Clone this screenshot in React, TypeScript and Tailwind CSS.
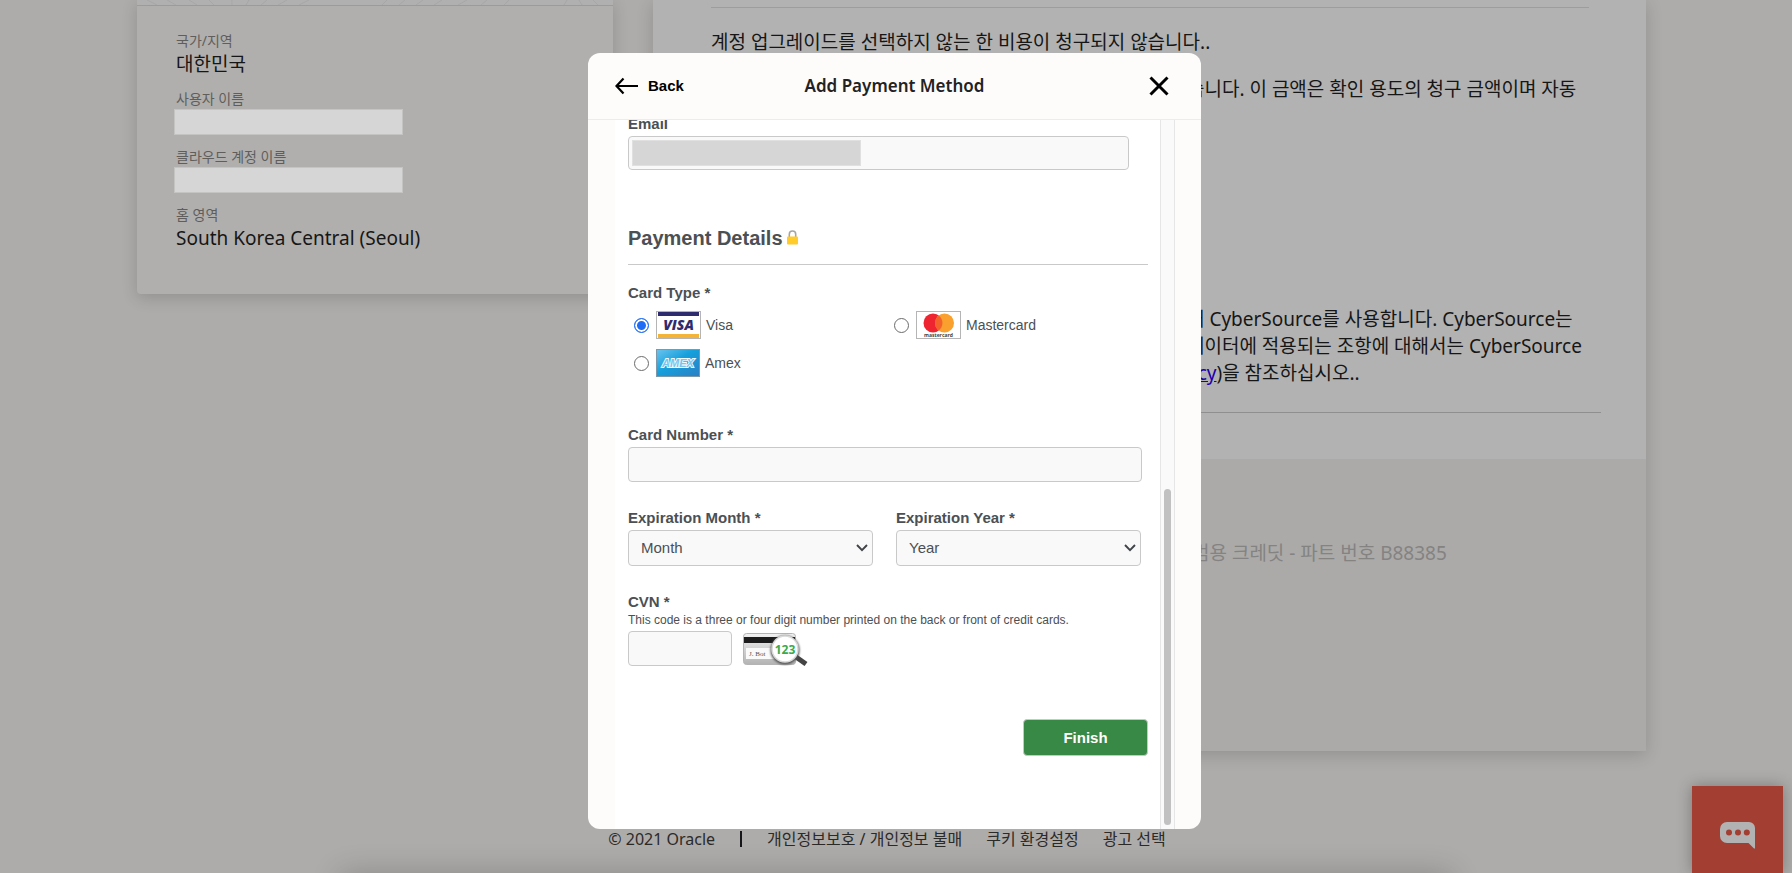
import React from 'react';

const KR = "font-['Noto_Sans','Noto_Sans_CJK_KR',sans-serif]";
const ARIAL = "font-['Liberation_Sans',Arial,sans-serif]";

function VisaLogo() {
  return (
    <svg width="45" height="28" viewBox="0 0 45 28" aria-hidden="true">
      <rect x=".5" y=".5" width="44" height="27" fill="#fff" stroke="#b5b5b5" />
      <rect x="2" y="1" width="41" height="4" fill="#2f2b6f" />
      <rect x="2" y="23" width="41" height="4" fill="#f3b437" />
      <text x="22.5" y="19" textAnchor="middle" fontFamily="Open Sans" fontSize="14" fontWeight="800" fontStyle="italic" fill="#2f2b6f">VISA</text>
    </svg>
  );
}

function MastercardLogo() {
  return (
    <svg width="45" height="28" viewBox="0 0 45 28" aria-hidden="true">
      <rect x=".5" y=".5" width="44" height="27" fill="#fff" stroke="#b5b5b5" />
      <circle cx="17" cy="12" r="9.5" fill="#ee2430" />
      <circle cx="28.5" cy="12" r="9.5" fill="#f9a02e" />
      <path d="M22.75 4.5a9.5 9.5 0 0 1 0 15a9.5 9.5 0 0 1 0-15z" fill="#f3622b" />
      <text x="22.5" y="26" textAnchor="middle" fontFamily="Open Sans" fontSize="5" fontWeight="700" fill="#444">mastercard</text>
    </svg>
  );
}

function AmexLogo() {
  return (
    <svg width="44" height="28" viewBox="0 0 44 28" aria-hidden="true">
      <defs>
        <linearGradient id="amexBlue" x1="0" y1="0" x2="1" y2="1">
          <stop offset="0" stopColor="#6cc4ee" />
          <stop offset=".45" stopColor="#15a0dc" />
          <stop offset="1" stopColor="#2a7fc4" />
        </linearGradient>
      </defs>
      <rect x=".5" y=".5" width="43" height="27" fill="url(#amexBlue)" stroke="#7d98a8" />
      <text x="22" y="17.500" textAnchor="middle" fontFamily="Liberation Sans" fontSize="11" fontWeight="700" fontStyle="italic" fill="#7cc4ec" stroke="#f2fafe" strokeWidth="1.800" paintOrder="stroke">AMEX</text>
    </svg>
  );
}

function CvnPicture() {
  return (
    <svg width="65" height="35" viewBox="0 0 65 35" role="img" aria-label="Card security code">
      <defs>
        <linearGradient id="cardBack" x1="0" y1="0" x2="0" y2="1">
          <stop offset="0" stopColor="#f2f2f2" />
          <stop offset="1" stopColor="#b3b3b3" />
        </linearGradient>
        <filter id="soft" x="-30%" y="-30%" width="160%" height="160%">
          <feGaussianBlur stdDeviation="1.1" />
        </filter>
      </defs>
      <rect x=".5" y="2.5" width="52" height="31" rx="3" fill="url(#cardBack)" stroke="#b4b4b4" />
      <rect x="1" y="6" width="51" height="6" fill="#1c1c1c" />
      <rect x="3" y="17" width="29" height="11" fill="#fafafa" />
      <text x="6" y="25" fontFamily="Liberation Serif" fontSize="7" fill="#555">J. Bot</text>
      <path d="M53 26l10 7" stroke="#444" strokeWidth="5" />
      <circle cx="42" cy="19" r="14.5" fill="#555" filter="url(#soft)" />
      <circle cx="42" cy="18" r="13" fill="#fff" stroke="#d9d9d9" strokeWidth="1.5" />
      <text x="42" y="23" textAnchor="middle" fontFamily="Open Sans" fontSize="12" fontWeight="700" fill="#38ab4c">123</text>
    </svg>
  );
}

function CardOption({ id, label, logo, checked }: { id: string; label: string; logo: React.ReactNode; checked?: boolean }) {
  return (
    <label htmlFor={id} className="flex h-7 items-center pl-[6px] text-sm">
      <input
        id={id}
        type="radio"
        name="card_type"
        defaultChecked={checked}
        className="mr-[7px] size-[15px] shrink-0 appearance-none rounded-full border border-[#6b6b6b] bg-white checked:border-[#1f6df5] checked:bg-[#1f6df5] checked:shadow-[inset_0_0_0_2px_#fff]"
      />
      {logo}
      <span className="ml-[5px]">{label}</span>
    </label>
  );
}

function Dropdown({ id, label, value }: { id: string; label: string; value: string }) {
  return (
    <div className="w-[245px]">
      <label htmlFor={id} className="block h-[21px] font-bold">{label}</label>
      <div className="grid items-center">
        <select id={id} className="col-start-1 row-start-1 h-[36px] w-full appearance-none rounded border border-[#c9c9c9] bg-[#f9f9f9] pl-3 text-[#4b5054]">
          <option>{value}</option>
        </select>
        <svg className="pointer-events-none col-start-1 row-start-1 mr-[5px] justify-self-end" width="12" height="8" viewBox="0 0 12 8" fill="none" stroke="#404448" strokeWidth="1.9" aria-hidden="true">
          <path d="M1 1l5 5.2L11 1" />
        </svg>
      </div>
    </div>
  );
}

function AccountCard() {
  return (
    <section className="w-[476px] shrink-0 overflow-hidden rounded-b bg-[#b0afad] shadow-[0_4px_16px_rgba(0,0,0,0.16)]">
      <div className="h-[6px] border-b border-[#9c9b9a] bg-[#b0b0b0]">
        <svg width="100%" height="5" aria-hidden="true" fill="none" stroke="#a7a7a7">
          <path d="M10 0l10 5M30 0l9 5M52 0l8 5M72 0l5 5M95 0v5M112 0l-3 5M130 0l-6 5M150 0l-9 5M172 0l-10 5M250 0l-5 5M268 0l-6 5M286 0l-7 5M305 0l-8 5M330 0l-9 5M350 0l-6 5M372 0l-5 5M430 0l-3 5M442 0l3 5M456 0l5 5" />
        </svg>
      </div>
      <dl className="px-[39px] pt-[25px] pb-[42px] text-[19px] leading-[27px] text-[#161616]">
        <dt className="text-sm leading-5 text-[#5f5e5d]">국가/지역</dt>
        <dd className="mb-[11px]">대한민국</dd>
        <dt className="text-sm leading-5 text-[#5f5e5d]">사용자 이름</dt>
        <dd className="mb-3 -ml-[2px] h-[26px] w-[229px] border border-[#c4c4c3] bg-[#d6d6d6]" />
        <dt className="text-sm leading-5 text-[#5f5e5d]">클라우드 계정 이름</dt>
        <dd className="mb-3 -ml-[2px] h-[26px] w-[229px] border border-[#c4c4c3] bg-[#d6d6d6]" />
        <dt className="text-sm leading-5 text-[#5f5e5d]">홈 영역</dt>
        <dd>South Korea Central (Seoul)</dd>
      </dl>
    </section>
  );
}

function UpgradeCard() {
  return (
    <section className="min-w-0 flex-1 bg-[#b2b2b2] text-[19px] leading-[27px] whitespace-nowrap text-[#161616] shadow-[0_4px_16px_rgba(0,0,0,0.16)]">
      <div className="mr-[57px] ml-[58px] pt-[7px]">
        <div className="border-t border-[#9d9d9d]" />
        <p className="mt-[21px]">계정 업그레이드를 선택하지 않는 한 비용이 청구되지 않습니다..</p>
        <div className="pl-[476px]">
          <p className="mt-[20px]">습니다. 이 금액은 확인 용도의 청구 금액이며 자동</p>
          <p className="mt-[203px]">
            해 CyberSource를 사용합니다. CyberSource는
            <br />
            데이터에 적용되는 조항에 대해서는 CyberSource
            <br />
            <a href="#privacy" className="text-[#1c00ae] underline">acy</a>)을 참조하십시오..
          </p>
        </div>
      </div>
      <div className="mx-[45px] mt-[25px] border-t border-[#8f8f8f]" />
      <div className="mt-[46px] h-[292px] bg-[#abaaa8] pt-[80px] pl-[539px] leading-7 text-[#848382]">
        범용 크레딧 - 파트 번호 B88385
      </div>
    </section>
  );
}

function PaymentDialog() {
  return (
    <div role="dialog" aria-label="Add Payment Method" className="flex h-full w-[613px] flex-col overflow-hidden rounded-xl bg-[#fdfcfb]">
      <header className="grid h-[67px] shrink-0 grid-cols-3 items-center border-b border-[#ececeb] px-[27px]">
        <button type="button" className={`flex items-center gap-[9px] text-[15px] font-bold text-black ${ARIAL}`}>
          <svg width="24" height="18" viewBox="0 0 24 18" fill="none" stroke="#000" strokeWidth="2.2" aria-hidden="true">
            <path d="M23 9H1.5M8.5 1.5L1.5 9l7 7.5" />
          </svg>
          Back
        </button>
        <h1 className="text-center text-[17px] font-semibold whitespace-nowrap text-[#222]">Add Payment Method</h1>
        <button type="button" aria-label="Close" className="mr-[5px] justify-self-end">
          <svg width="20" height="20" viewBox="0 0 20 20" stroke="#000" strokeWidth="3" aria-hidden="true">
            <path d="M1.5 1.5l17 17M18.5 1.5l-17 17" />
          </svg>
        </button>
      </header>

      <div className="mr-[26px] ml-[27px] flex min-h-0 flex-1">
        <form className={`min-w-0 flex-1 overflow-hidden bg-white pr-3 pl-[13px] text-[15px] leading-[18px] text-[#4b5054] ${ARIAL}`}>
          <div className="-mt-[5px] mr-[5px]">
            <label htmlFor="email" className="block h-[21px] font-bold">Email</label>
            <div className="mr-[14px] grid items-center">
              <input id="email" type="email" className="col-start-1 row-start-1 h-[34px] w-full rounded border border-[#c9c9c9] bg-[#f9f9f9]" />
              <div className="pointer-events-none col-start-1 row-start-1 ml-1 h-[26px] w-[229px] border border-[#e0e0e0] bg-[#d6d6d6]" />
            </div>
          </div>

          <h2 className="mt-[57px] flex h-[38px] gap-1 border-b border-[#c9c9c9] text-xl leading-[22px] font-bold">
            Payment Details
            <svg className="mt-[3px]" width="11" height="15" viewBox="0 0 11 15" aria-hidden="true">
              <path d="M2.3 7.5V4.2a3.2 3.2 0 0 1 6.4 0V7.5" fill="none" stroke="#a5a5a5" strokeWidth="1.6" />
              <rect y="6.5" width="11" height="8" rx="1" fill="#ffcc29" />
            </svg>
          </h2>

          <fieldset className="mt-[19px]">
            <legend className="mb-[9px] block font-bold">Card Type *</legend>
            <div className="grid grid-cols-2 gap-y-[10px]">
              <CardOption id="visa" label="Visa" logo={<VisaLogo />} checked />
              <CardOption id="mastercard" label="Mastercard" logo={<MastercardLogo />} />
              <CardOption id="amex" label="Amex" logo={<AmexLogo />} />
            </div>
          </fieldset>

          <div className="mt-[49px] mr-[6px]">
            <label htmlFor="number" className="block h-[21px] font-bold">Card Number *</label>
            <input id="number" type="text" className="block h-[35px] w-full rounded border border-[#c9c9c9] bg-[#f9f9f9] px-3" />
          </div>

          <div className="mt-[27px] mr-[7px] flex justify-between">
            <Dropdown id="month" label="Expiration Month *" value="Month" />
            <Dropdown id="year" label="Expiration Year *" value="Year" />
          </div>

          <div className="mt-[27px]">
            <label htmlFor="cvn" className="block font-bold">CVN *</label>
            <p className="mb-[2px] text-xs leading-[18px]">This code is a three or four digit number printed on the back or front of credit cards.</p>
            <div className="flex items-center gap-[11px]">
              <input id="cvn" type="text" className="h-[35px] w-[104px] rounded border border-[#c9c9c9] bg-[#f9f9f9] px-3" />
              <CvnPicture />
            </div>
          </div>

          <div className="mt-[53px] flex justify-end">
            <button type="button" className="h-[37px] w-[125px] rounded border border-[#c6c9c6] bg-[#398946] font-bold text-white">Finish</button>
          </div>
        </form>
        <div className="flex w-[15px] flex-col justify-end border-x border-[#e6e6e6] bg-[#fafafa] px-[3px] pb-1">
          <div className="h-[336px] rounded-full bg-[#c1c1c1]" />
        </div>
      </div>
    </div>
  );
}

export default function App() {
  return (
    <div className={`flex min-h-screen flex-col overflow-hidden bg-[#adacaa] ${KR}`}>
      <main className="flex items-start gap-[40px] pr-[146px] pl-[137px]">
        <AccountCard />
        <UpgradeCard />
      </main>

      <footer className="mt-[76px] flex items-center justify-center pr-[18px] text-base leading-6 text-[#2b2a29]">
        <span>© 2021 Oracle</span>
        <span className="mx-[25px] h-4 w-[2px] bg-[#161616]" />
        <nav className="flex gap-6">
          <a href="#privacy-notice">개인정보보호 / 개인정보 불매</a>
          <a href="#cookies">쿠키 환경설정</a>
          <a href="#ads">광고 선택</a>
        </nav>
      </footer>

      <div className="fixed inset-x-[340px] top-full h-10 shadow-[0_0_30px_rgba(0,0,0,0.2)]" />

      <div className="fixed inset-0 flex justify-center pt-[53px] pr-[3px] pb-[44px]">
        <PaymentDialog />
      </div>

      <button type="button" aria-label="Chat" className="fixed right-[9px] bottom-0 flex h-[87px] w-[91px] items-center justify-center bg-[#a33e32] pt-[12px] shadow-[0_0_14px_rgba(0,0,0,0.3)]">
        <svg width="35" height="27" viewBox="0 0 35 27" aria-hidden="true">
          <path d="M7 0h22a6 6 0 0 1 6 6v20.500h-1L28.500 21H7a7 7 0 0 1-7-7V7a7 7 0 0 1 7-7z" fill="#b2b2b2" />
          <circle cx="9" cy="10.500" r="3" fill="#a33e32" />
          <circle cx="18" cy="10.500" r="3" fill="#a33e32" />
          <circle cx="26.800" cy="10.500" r="3" fill="#a33e32" />
        </svg>
      </button>
    </div>
  );
}
